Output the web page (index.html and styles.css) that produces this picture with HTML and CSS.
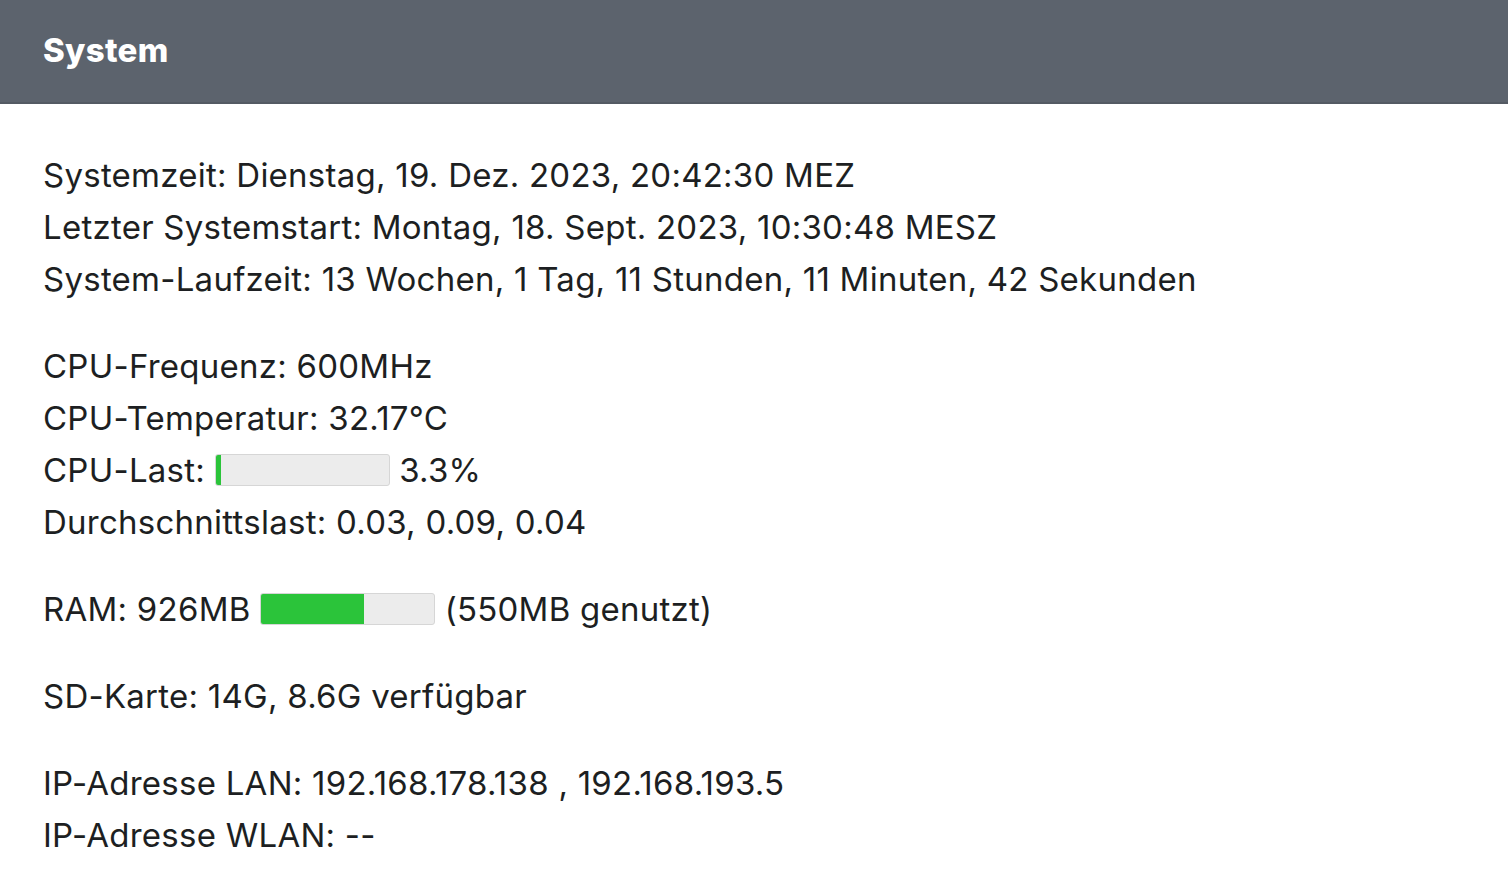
FILE: index.html
```html
<!DOCTYPE html>
<html lang="de">
<head>
<meta charset="utf-8">
<title>System</title>
<link rel="stylesheet" href="styles.css">
</head>
<body>
<header class="header"><h1 class="title">System</h1></header>
<main class="content">
  <div class="group">
    <div class="line">Systemzeit: Dienstag, 19. Dez. 2023, 20:42:30 MEZ</div>
    <div class="line">Letzter Systemstart: Montag, 18. Sept. 2023, 10:30:48 MESZ</div>
    <div class="line">System-Laufzeit: 13 Wochen, 1 Tag, 11 Stunden, 11 Minuten, 42 Sekunden</div>
  </div>
  <div class="group">
    <div class="line">CPU-Frequenz: 600MHz</div>
    <div class="line">CPU-Temperatur: 32.17°C</div>
    <div class="line">CPU-Last: <span class="bar"><span class="fill" style="width:3.3%"></span></span> 3.3%</div>
    <div class="line">Durchschnittslast: 0.03, 0.09, 0.04</div>
  </div>
  <div class="group">
    <div class="line">RAM: 926MB <span class="bar"><span class="fill" style="width:59.4%"></span></span> (550MB genutzt)</div>
  </div>
  <div class="group">
    <div class="line">SD-Karte: 14G, 8.6G verfügbar</div>
  </div>
  <div class="group">
    <div class="line">IP-Adresse LAN: 192.168.178.138 , 192.168.193.5</div>
    <div class="line">IP-Adresse WLAN: --</div>
  </div>
</main>
</body>
</html>
```
FILE: styles.css
```css
html, body {
  margin: 0;
  padding: 0;
  background: #ffffff;
}
body {
  font-family: Inter, "Liberation Sans", sans-serif;
  color: #1d1f22;
}
.header {
  background: #5c636d;
  height: 102px;
  border-bottom: 2px solid #545a63;
  display: flex;
  align-items: center;
  padding: 0 43px;
}
.title {
  margin: 0 0 3px;
  color: #ffffff;
  font-size: 33px;
  font-weight: 800;
  letter-spacing: 0.3px;
}
.content {
  padding: 45px 43px 0;
}
.group {
  margin-bottom: 35px;
}
.line {
  font-size: 33px;
  line-height: 52px;
  letter-spacing: 0.25px;
  white-space: nowrap;
}
.bar {
  display: inline-block;
  vertical-align: middle;
  position: relative;
  top: -3px;
  width: 173px;
  height: 30px;
  background: #ececec;
  border: 1px solid #d6d6d6;
  border-radius: 3px;
  overflow: hidden;
}
.fill {
  display: block;
  height: 100%;
  background: #2bc43a;
  min-width: 4px;
}
```
